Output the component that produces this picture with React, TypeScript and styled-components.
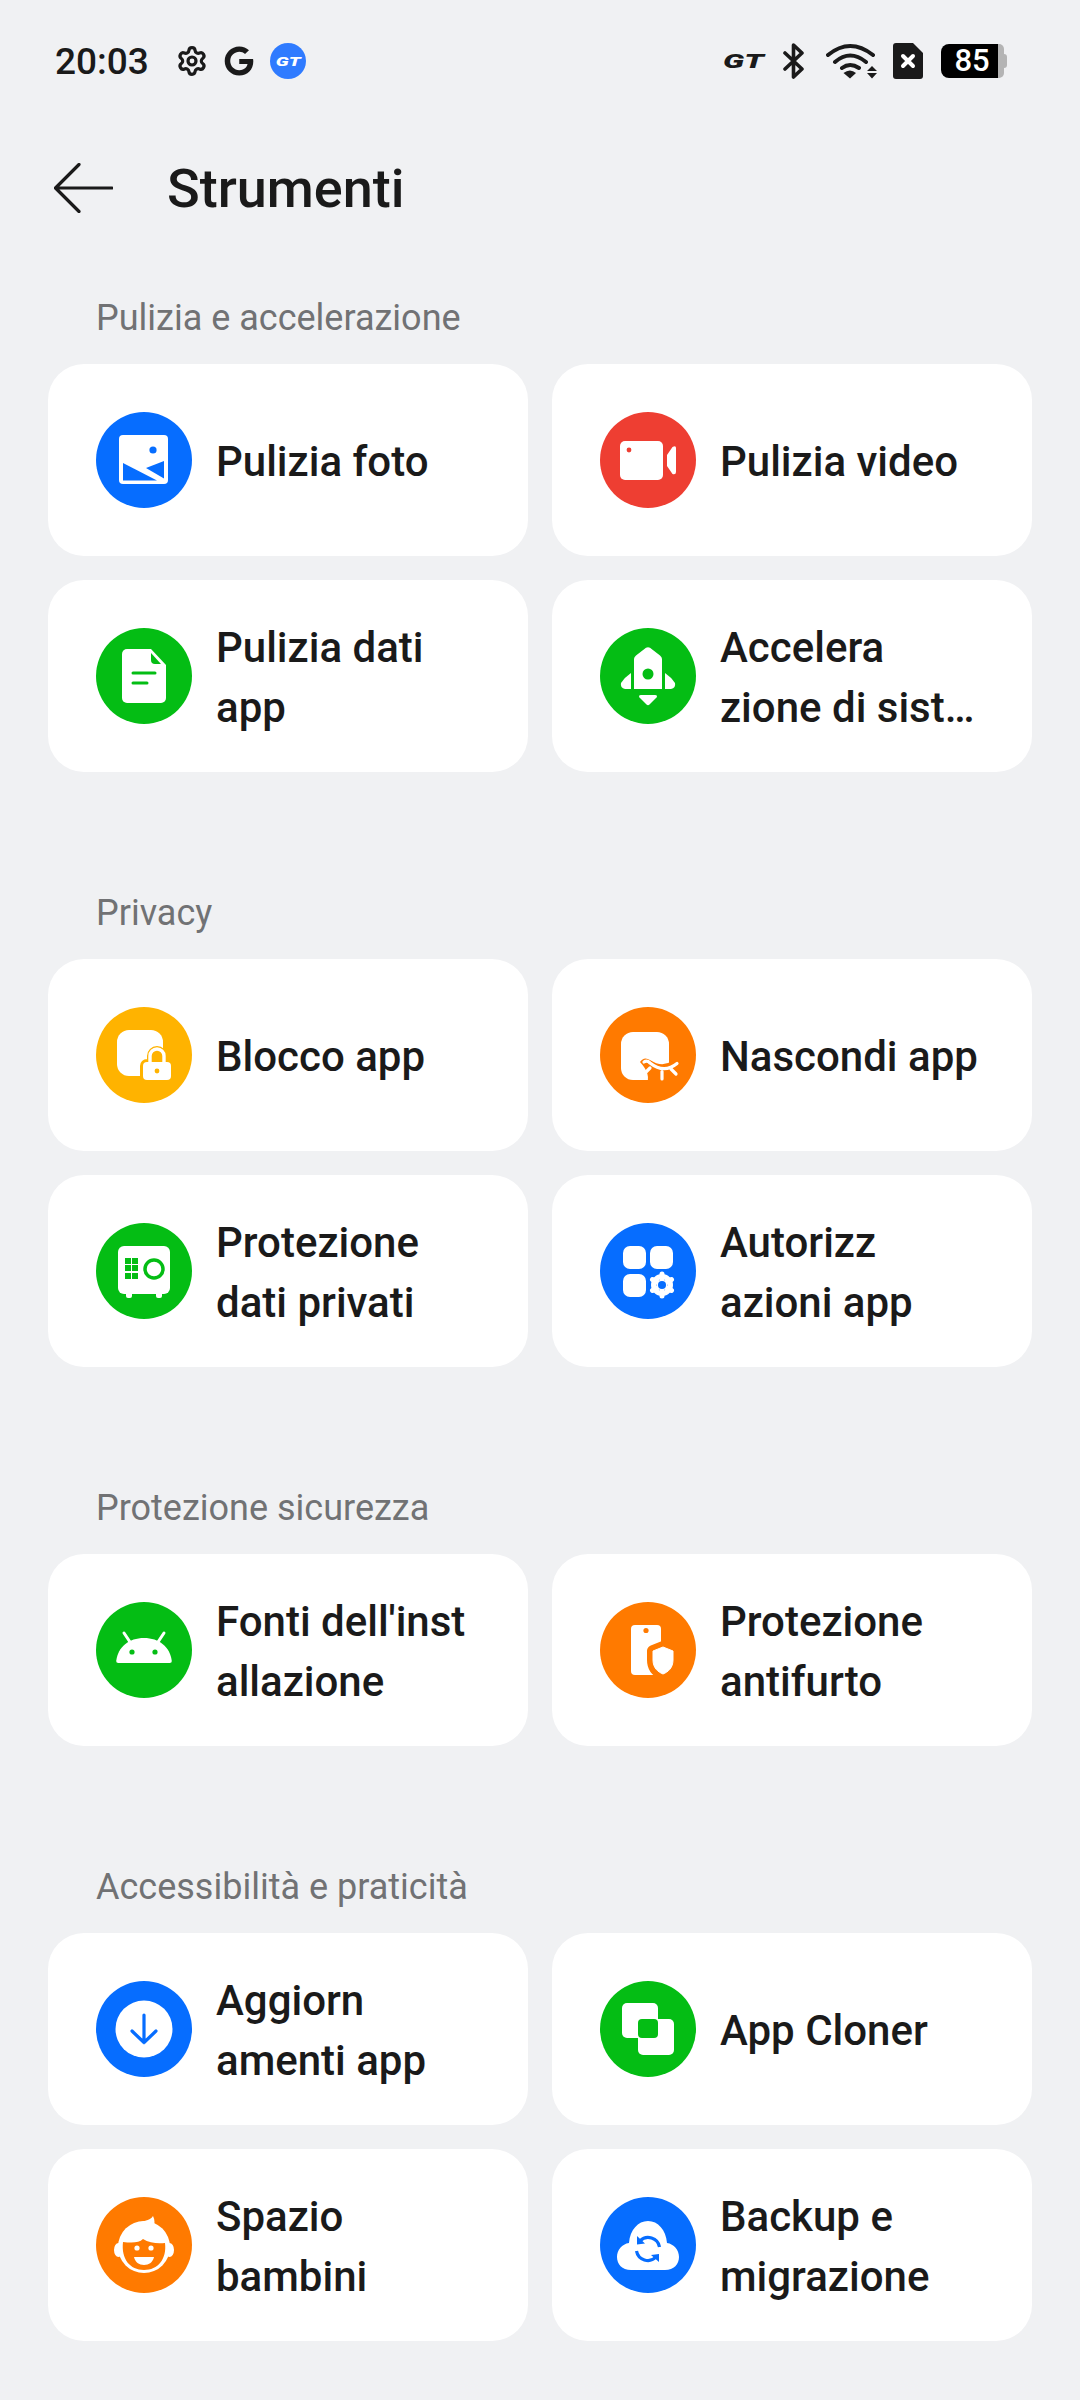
import React from 'react';
import styled, { createGlobalStyle } from 'styled-components';
import { FaGoogle } from 'react-icons/fa';
import { Settings } from 'lucide-react';

const BLUE = '#066dff';
const GREEN = '#04bd14';
const RED = '#ee3e32';
const ORANGE = '#ff7a00';
const YELLOW = '#ffb300';

const GlobalStyle = createGlobalStyle`
    html, body {
        margin: 0;
        padding: 0;
        background: #f0f1f3;
        font-family: Roboto, "Liberation Sans", sans-serif;
    }
`;

const Page = styled.div`
    width: 1080px;
    height: 2400px;
    background: #f0f1f3;
    color: #1a1a1a;
    overflow: hidden;
`;

const StatusBar = styled.div`
    height: 122px;
    padding: 0 73px 0 55px;
    box-sizing: border-box;
    display: flex;
    align-items: center;
    justify-content: space-between;
`;

const StatusGroup = styled.div`
    display: flex;
    align-items: center;
    gap: 16px;
`;

const Clock = styled.span`
    font-size: 37px;
    font-weight: 500;
    margin-right: 11px;
`;

const StatusRight = styled.div`
    display: flex;
    align-items: center;
    gap: 16px;
`;

const GtBadge = styled.div`
    width: 36px;
    height: 36px;
    border-radius: 50%;
    background: #2f7bff;
    color: #fff;
    display: flex;
    align-items: center;
    justify-content: center;
    font-size: 13px;
    font-weight: 900;
    font-style: italic;
`;

const GtInner = styled.span`
    display: block;
    transform: scaleX(1.5);
`;

const GtMark = styled.span`
    width: 44px;
    font-size: 20px;
    line-height: 20px;
    font-weight: 900;
    font-style: italic;
    color: #1a1a1a;
    transform: scaleX(1.6);
    transform-origin: left center;
`;

const Battery = styled.div`
    display: flex;
    align-items: center;
    margin-left: 2px;
`;

const BatteryBody = styled.div`
    width: 57px;
    height: 34px;
    background: #000;
    color: #fff;
    border-radius: 8px 0 0 8px;
    font-size: 31px;
    font-weight: 500;
    line-height: 34px;
    text-align: center;
    padding-left: 5px;
    box-sizing: border-box;
`;

const BatteryRest = styled.div`
    width: 6px;
    height: 34px;
    background: #b4b4b4;
    border-radius: 0 5px 5px 0;
`;

const BatteryNub = styled.div`
    width: 3px;
    height: 14px;
    background: #b4b4b4;
    border-radius: 0 3px 3px 0;
`;

const Header = styled.header`
    height: 132px;
    margin-bottom: 40px;
    padding-left: 54px;
    display: flex;
    align-items: center;
    gap: 54px;
`;

const Title = styled.h1`
    margin: 0;
    font-size: 54px;
    font-weight: 490;
`;

const Section = styled.section`
    padding: 0 48px;
    margin-bottom: 117px;
`;

const SectionLabel = styled.h2`
    margin: 0 0 22px 48px;
    font-size: 36px;
    line-height: 48px;
    font-weight: 420;
    color: #717274;
`;

const Grid = styled.div`
    display: grid;
    grid-template-columns: 480px 480px;
    gap: 24px;
`;

const Card = styled.div`
    height: 192px;
    padding-left: 48px;
    box-sizing: border-box;
    background: #fff;
    border-radius: 36px;
    display: flex;
    align-items: center;
    gap: 24px;
`;

const Badge = styled.div<{ $tone: string }>`
    width: 96px;
    height: 96px;
    flex: none;
    border-radius: 50%;
    background: ${p => p.$tone};
    color: ${p => p.$tone};

    svg {
        display: block;
    }
`;

const CardText = styled.div`
    padding-top: 3px;
    font-size: 42px;
    line-height: 60px;
    font-weight: 480;
    color: #1a1a1a;
    white-space: nowrap;
`;

const Line = styled.span`
    display: block;
`;

const Glyph: React.FC<{ children: React.ReactNode }> = ({ children }) => (
    <svg width="96" height="96" viewBox="0 0 96 96" fill="#fff">{children}</svg>
);

const PhotoIcon = () => (
    <Glyph>
        <rect x="23" y="23" width="49" height="49" rx="4" />
        <circle cx="57" cy="38" r="3.6" fill="currentColor" />
        <path d="M27 51 L61 68.5 H27 Z" fill="currentColor" />
        <path d="M50 56 L68 49 V66.5 C62 63 56 59.5 50 56 Z" fill="currentColor" />
    </Glyph>
);

const VideoIcon = () => (
    <Glyph>
        <rect x="20" y="29" width="43" height="39" rx="5" />
        <circle cx="29" cy="38" r="2.4" fill="currentColor" />
        <path d="M67 43 L72.5 35 Q76 33 76 36 V60 Q76 63 72.5 62 L67 54 Z" />
    </Glyph>
);

const DocIcon = () => (
    <Glyph>
        <path d="M31 21 H55 L70 37 V70 A5 5 0 0 1 65 75 H31 A5 5 0 0 1 26 70 V26 A5 5 0 0 1 31 21 Z" />
        <path d="M55 25 L65 36 H59 A4 4 0 0 1 55 32 Z" fill="currentColor" />
        <path d="M37 45 H59 M37 55 H51" stroke="currentColor" strokeWidth="3" strokeLinecap="round" />
    </Glyph>
);

const RocketIcon = () => (
    <Glyph>
        <path d="M34 61 V31 Q34 29 36 27.5 L46 19.8 Q48 18.6 50 19.8 L60 27.5 Q62 29 62 31 V61 Z" />
        <circle cx="48" cy="46" r="5.5" fill="currentColor" />
        <path d="M31 45 V61 H25 Q20 60 21 55 Q25 49 31 45 Z" />
        <path d="M65 45 V61 H71 Q76 60 75 55 Q71 49 65 45 Z" />
        <path d="M41 67 H55 Q58 67 56.5 69.5 L49.5 76.5 Q48 78 46.5 76.5 L39.5 69.5 Q38 67 41 67 Z" />
    </Glyph>
);

const LockIcon = () => (
    <Glyph>
        <rect x="21" y="23" width="46" height="46" rx="12" />
        <path d="M47 59 A4 4 0 0 1 51 55 H71 A4 4 0 0 1 75 59 V69 A4 4 0 0 1 71 73 H51 A4 4 0 0 1 47 69 Z M54 55 V49 A7 7 0 0 1 68 49 V55" fill="currentColor" stroke="currentColor" strokeWidth="6" />
        <rect x="47" y="55" width="28" height="18" rx="4" />
        <path d="M54 55 V49 A7 7 0 0 1 68 49 V55" fill="none" stroke="#fff" strokeWidth="3.4" />
        <circle cx="61" cy="64" r="2.4" fill="currentColor" />
    </Glyph>
);

const HideIcon = () => (
    <Glyph>
        <rect x="21" y="25" width="48" height="48" rx="12" />
        <path d="M40 55 Q44 49 50 53 Q62 61 72 54 V78 H46 Q52 68 40 55 Z" fill="currentColor" />
        <path d="M44 55 Q47 53 50 56 Q64 67 77 56.5 M50 61 L45 66 M62 64.5 L62 72 M71 62 L76 67" fill="none" stroke="#fff" strokeWidth="3.2" strokeLinecap="round" />
    </Glyph>
);

const SafeIcon = () => (
    <Glyph>
        <rect x="22" y="23" width="52" height="48" rx="6" />
        <rect x="30" y="68" width="6" height="7" rx="2" />
        <rect x="60" y="68" width="6" height="7" rx="2" />
        {[35, 42, 50].map(y => [29, 36].map(x => (
            <rect key={`${x}-${y}`} x={x} y={y} width="6" height="6" fill="currentColor" />
        )))}
        <circle cx="58" cy="46" r="9" fill="none" stroke="currentColor" strokeWidth="3.5" />
    </Glyph>
);

const AppsIcon = () => (
    <Glyph>
        <rect x="23" y="23" width="23" height="23" rx="7" />
        <rect x="50" y="23" width="23" height="23" rx="7" />
        <rect x="23" y="51" width="23" height="23" rx="7" />
        <circle cx="62" cy="62" r="8.5" fill="none" stroke="#fff" strokeWidth="5" />
        <path d="M62 51 V73 M52.5 56.5 L71.5 67.5 M52.5 67.5 L71.5 56.5" stroke="#fff" strokeWidth="5" strokeLinecap="round" />
        <circle cx="62" cy="62" r="4" fill="currentColor" />
    </Glyph>
);

const AndroidIcon = () => (
    <Glyph>
        <path d="M22.5 61 Q20 61 20.3 58.5 C22 45 33 36 48 36 C63 36 74 45 75.7 58.5 Q76 61 73.5 61 Z" />
        <path d="M28 31 L34 40 M68 31 L62 40" stroke="#fff" strokeWidth="3" strokeLinecap="round" />
        <circle cx="36" cy="50" r="2.6" fill="currentColor" />
        <circle cx="59" cy="50" r="2.6" fill="currentColor" />
    </Glyph>
);

const AntiTheftIcon = () => (
    <Glyph>
        <rect x="31" y="23" width="30" height="50" rx="4" />
        <circle cx="46" cy="28.5" r="2.6" fill="currentColor" />
        <path d="M63 45 L73 49 V58 C73 66 68 70 63 72 C58 70 53 66 53 58 V49 Z" fill="currentColor" stroke="currentColor" strokeWidth="12" strokeLinejoin="round" />
        <path d="M63 45 L73 49 V58 C73 66 68 70 63 72 C58 70 53 66 53 58 V49 Z" strokeLinejoin="round" stroke="#fff" strokeWidth="1" />
    </Glyph>
);

const DownloadIcon = () => (
    <Glyph>
        <circle cx="48" cy="48" r="28.5" />
        <path d="M48 34 V61.5 M36 50 L48 61.5 L60 50" fill="none" stroke="currentColor" strokeWidth="3.2" strokeLinecap="round" strokeLinejoin="round" />
    </Glyph>
);

const CloneIcon = () => (
    <Glyph>
        <rect x="22" y="22" width="36" height="35" rx="5" />
        <rect x="38" y="38" width="36" height="36" rx="5" />
        <rect x="38" y="38" width="20" height="19" rx="4" fill="currentColor" />
    </Glyph>
);

const KidIcon = () => (
    <Glyph>
        <circle cx="48" cy="50" r="26" />
        <ellipse cx="22.5" cy="53" rx="4.5" ry="7" />
        <ellipse cx="73.5" cy="53" rx="4.5" ry="7" />
        <path d="M38 27 C46 24 54 24 57 19 C59 23 59 27 57 31 Z" />
        <path d="M27 45 C36 46 43 46 47 42 C53 46 62 47 69 46 C71 62 62 73 48 73 C34 73 25 62 27 45 Z" fill="currentColor" />
        <circle cx="41" cy="51" r="2.6" />
        <circle cx="55" cy="51" r="2.6" />
        <path d="M38 60 H58 C57 65 53 68 48 68 C43 68 39 65 38 60 Z" />
    </Glyph>
);

const BackupIcon = () => (
    <Glyph>
        <path d="M31 73 C22 73 17 67 17 60 C17 53 22 47 29 46 C30 33 38 24 48 24 C58 24 66 33 67 46 C74 47 79 53 79 60 C79 67 74 73 65 73 Z" />
        <path d="M40 44 A11.5 11.5 0 0 1 59.5 50 M36.5 54 A11.5 11.5 0 0 0 56 60" fill="none" stroke="currentColor" strokeWidth="3.2" />
        <path d="M37 39 L45 46.5 L37 47.5 Z M59 65 L51 58 L59 57 Z" fill="currentColor" />
    </Glyph>
);

const BackArrow = () => (
    <svg width="59" height="50" viewBox="0 0 59 50" fill="none" stroke="#1a1a1a" strokeWidth="3.2" strokeLinecap="round" strokeLinejoin="round">
        <path d="M1.5 25 H58 M25 1.5 L1.5 25 L25 48.5" />
    </svg>
);

const BluetoothGlyph = () => (
    <svg width="27" height="36" viewBox="0 0 27 36" fill="none" stroke="#1a1a1a" strokeWidth="3.6" strokeLinejoin="round" strokeLinecap="round">
        <path d="M2 10 L19 26 L10.5 34 V2 L19 10 L2 26" />
    </svg>
);

const WifiGlyph = () => (
    <svg width="51" height="36" viewBox="0 0 51 36" fill="none" stroke="#1a1a1a" strokeWidth="4" strokeLinecap="round">
        <path d="M2 12 Q24 -6 47 12 M9 19 Q24 6 40 19 M16 25 Q24 19 33 25" />
        <path d="M17.5 30 Q24 25 30 30 L24 35.5 Z" fill="#1a1a1a" stroke="none" />
        <path d="M41 28 L46 23 L51 28 Z M41 30 H51 L46 35.5 Z" fill="#1a1a1a" stroke="none" />
    </svg>
);

const SimGlyph = () => (
    <svg width="30" height="36" viewBox="0 0 30 36">
        <path d="M3 0 H20 L30 10 V33 A3 3 0 0 1 27 36 H3 A3 3 0 0 1 0 33 V3 A3 3 0 0 1 3 0 Z" fill="#1a1a1a" />
        <path d="M10 13 L20 23 M20 13 L10 23" stroke="#fff" strokeWidth="4" strokeLinecap="round" />
    </svg>
);

interface Tool {
    lines: string[];
    tone: string;
    icon: React.ReactNode;
}

const groups: { label: string; tools: Tool[] }[] = [
    {
        label: 'Pulizia e accelerazione',
        tools: [
            { lines: ['Pulizia foto'], tone: BLUE, icon: <PhotoIcon /> },
            { lines: ['Pulizia video'], tone: RED, icon: <VideoIcon /> },
            { lines: ['Pulizia dati', 'app'], tone: GREEN, icon: <DocIcon /> },
            { lines: ['Accelera', 'zione di sist…'], tone: GREEN, icon: <RocketIcon /> },
        ],
    },
    {
        label: 'Privacy',
        tools: [
            { lines: ['Blocco app'], tone: YELLOW, icon: <LockIcon /> },
            { lines: ['Nascondi app'], tone: ORANGE, icon: <HideIcon /> },
            { lines: ['Protezione', 'dati privati'], tone: GREEN, icon: <SafeIcon /> },
            { lines: ['Autorizz', 'azioni app'], tone: BLUE, icon: <AppsIcon /> },
        ],
    },
    {
        label: 'Protezione sicurezza',
        tools: [
            { lines: ["Fonti dell'inst", 'allazione'], tone: GREEN, icon: <AndroidIcon /> },
            { lines: ['Protezione', 'antifurto'], tone: ORANGE, icon: <AntiTheftIcon /> },
        ],
    },
    {
        label: 'Accessibilità e praticità',
        tools: [
            { lines: ['Aggiorn', 'amenti app'], tone: BLUE, icon: <DownloadIcon /> },
            { lines: ['App Cloner'], tone: GREEN, icon: <CloneIcon /> },
            { lines: ['Spazio', 'bambini'], tone: ORANGE, icon: <KidIcon /> },
            { lines: ['Backup e', 'migrazione'], tone: BLUE, icon: <BackupIcon /> },
        ],
    },
];

const App: React.FC = () => (
    <Page>
        <GlobalStyle />
        <StatusBar>
            <StatusGroup>
                <Clock>20:03</Clock>
                <Settings size={32} strokeWidth={2.4} color="#1a1a1a" />
                <FaGoogle size={30} color="#1a1a1a" />
                <GtBadge><GtInner>GT</GtInner></GtBadge>
            </StatusGroup>
            <StatusRight>
                <GtMark>GT</GtMark>
                <BluetoothGlyph />
                <WifiGlyph />
                <SimGlyph />
                <Battery>
                    <BatteryBody>85</BatteryBody>
                    <BatteryRest />
                    <BatteryNub />
                </Battery>
            </StatusRight>
        </StatusBar>
        <Header>
            <BackArrow />
            <Title>Strumenti</Title>
        </Header>
        {groups.map(group => (
            <Section key={group.label}>
                <SectionLabel>{group.label}</SectionLabel>
                <Grid>
                    {group.tools.map(tool => (
                        <Card key={tool.lines.join(' ')}>
                            <Badge $tone={tool.tone}>{tool.icon}</Badge>
                            <CardText>
                                {tool.lines.map(line => <Line key={line}>{line}</Line>)}
                            </CardText>
                        </Card>
                    ))}
                </Grid>
            </Section>
        ))}
    </Page>
);

export default App;
